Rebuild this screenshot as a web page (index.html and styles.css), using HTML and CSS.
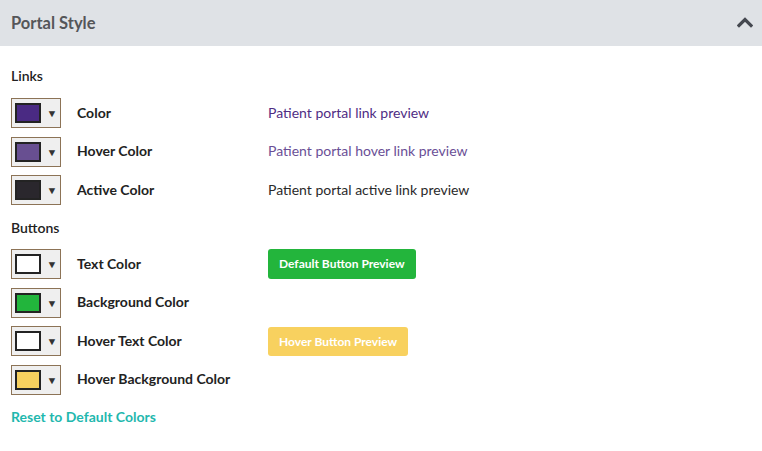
FILE: index.html
```html
<!DOCTYPE html>
<html>
<head>
<meta charset="utf-8">
<link rel="stylesheet" href="styles.css">
</head>
<body>
<div class="panel">
  <div class="panel-header">
    <span class="panel-title">Portal Style</span>
    <svg class="chevron" width="16" height="12" viewBox="0 0 16 12"><path d="M2 9.5 L8 3.5 L14 9.5" fill="none" stroke="#454850" stroke-width="3.2" stroke-linecap="square"/></svg>
  </div>
  <div class="panel-body">
    <div class="section-label">Links</div>
    <div class="rows">
      <div class="row">
        <div class="picker"><span class="swatch" style="background:#4a2a83"></span><span class="arrow">▼</span></div>
        <div class="label">Color</div>
        <div class="preview link-preview">Patient portal link preview</div>
      </div>
      <div class="row">
        <div class="picker"><span class="swatch" style="background:#684f91"></span><span class="arrow">▼</span></div>
        <div class="label">Hover Color</div>
        <div class="preview hover-preview">Patient portal hover link preview</div>
      </div>
      <div class="row">
        <div class="picker"><span class="swatch" style="background:#2a272d"></span><span class="arrow">▼</span></div>
        <div class="label">Active Color</div>
        <div class="preview active-preview">Patient portal active link preview</div>
      </div>
    </div>
    <div class="section-label buttons-label">Buttons</div>
    <div class="rows">
      <div class="row">
        <div class="picker"><span class="swatch" style="background:#ffffff"></span><span class="arrow">▼</span></div>
        <div class="label">Text Color</div>
        <div class="btn-cell"><span class="btn btn-default">Default Button Preview</span></div>
      </div>
      <div class="row">
        <div class="picker"><span class="swatch" style="background:#22b53c"></span><span class="arrow">▼</span></div>
        <div class="label">Background Color</div>
        <div class="btn-cell"></div>
      </div>
      <div class="row">
        <div class="picker"><span class="swatch" style="background:#ffffff"></span><span class="arrow">▼</span></div>
        <div class="label">Hover Text Color</div>
        <div class="btn-cell"><span class="btn btn-hover">Hover Button Preview</span></div>
      </div>
      <div class="row">
        <div class="picker"><span class="swatch" style="background:#f8d15f"></span><span class="arrow">▼</span></div>
        <div class="label">Hover Background Color</div>
        <div class="btn-cell"></div>
      </div>
    </div>
    <a class="reset" href="#">Reset to Default Colors</a>
  </div>
</div>
</body>
</html>
```
FILE: styles.css
```css
html, body {
  margin: 0;
  padding: 0;
  background: #ffffff;
}
body {
  font-family: Lato, "Open Sans", "Liberation Sans", sans-serif;
  color: #222;
  font-size: 14px;
}
.panel {
  width: 762px;
}
.panel-header {
  height: 46px;
  background: #dfe2e6;
  display: flex;
  align-items: center;
  justify-content: space-between;
  padding: 0 9px 0 11px;
  box-sizing: border-box;
}
.panel-title {
  font-size: 16.5px;
  font-weight: 700;
  color: #555659;
  padding-bottom: 1px;
}
.chevron {
  display: block;
  margin-top: -2px;
}
.panel-body {
  padding: 21px 11px 0 11px;
}
.section-label {
  font-size: 14px;
  font-weight: 600;
  color: #222;
  line-height: 18px;
  height: 18px;
  margin-bottom: 13px;
}
.buttons-label {
  margin-top: 14px;
  margin-bottom: 12px;
}
.rows {
  display: flex;
  flex-direction: column;
  gap: 8.5px;
}
.row {
  display: grid;
  grid-template-columns: 50px 175px 1fr;
  column-gap: 16px;
  align-items: center;
  height: 30px;
}
.picker {
  box-sizing: border-box;
  width: 50px;
  height: 30px;
  border: 1px solid #8c7356;
  background: #efefef;
  display: flex;
  align-items: center;
  padding-left: 3px;
}
.swatch {
  box-sizing: border-box;
  width: 26px;
  height: 20px;
  border: 2px solid #232323;
  display: block;
}
.arrow {
  font-size: 10px;
  color: #333;
  margin-left: 6px;
  line-height: 1;
  transform: scaleX(1.1);
}
.label {
  font-weight: 700;
  font-size: 14px;
  color: #222;
  padding-bottom: 2px;
}
.preview {
  font-size: 14px;
  padding-bottom: 2px;
}
.btn-cell {
  height: 30px;
  display: flex;
  align-items: center;
}
.link-preview { color: #4f2d84; }
.hover-preview { color: #6a4f96; }
.active-preview { color: #2a2a2a; }
.btn {
  display: inline-block;
  color: #fff;
  font-weight: 700;
  font-size: 12px;
  border-radius: 3px;
  padding: 0 11px;
  height: 30px;
  line-height: 30px;
}
.btn-default {
  background: #23b53c;
}
.btn-hover {
  background: #f8d15f;
  height: 29px;
  line-height: 29px;
}
.reset {
  display: block;
  margin-top: 13px;
  font-size: 14px;
  font-weight: 700;
  color: #1fb8ae;
  text-decoration: none;
  line-height: 18px;
}
```
